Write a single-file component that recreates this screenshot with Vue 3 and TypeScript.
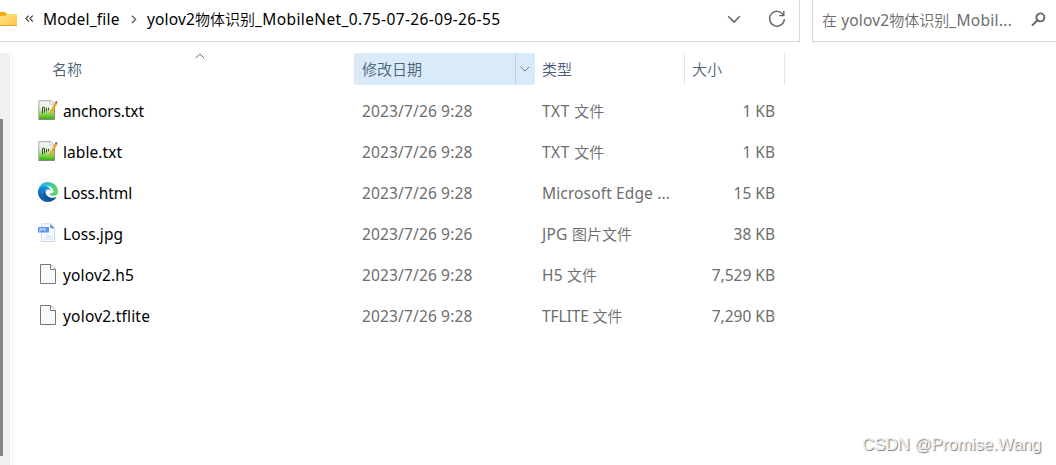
<script setup lang="ts">
type Kind = 'txt' | 'edge' | 'jpg' | 'blank'
interface FileRow {
  name: string
  nameGap: number
  date: string
  type: string
  typeCjk: string
  typeGap: number
  size: string
  kind: Kind
}
const files: FileRow[] = [
  { name: 'anchors.txt', nameGap: -0.1, date: '2023/7/26 9:28', type: 'TXT ', typeCjk: '文件', typeGap: 0.5, size: '1 KB', kind: 'txt' },
  { name: 'lable.txt', nameGap: 0.07, date: '2023/7/26 9:28', type: 'TXT ', typeCjk: '文件', typeGap: 0.5, size: '1 KB', kind: 'txt' },
  { name: 'Loss.html', nameGap: -0.13, date: '2023/7/26 9:28', type: 'Microsoft Edge ...', typeCjk: '', typeGap: 0.13, size: '15 KB', kind: 'edge' },
  { name: 'Loss.jpg', nameGap: 0.07, date: '2023/7/26 9:26', type: 'JPG ', typeCjk: '图片文件', typeGap: 0.25, size: '38 KB', kind: 'jpg' },
  { name: 'yolov2.h5', nameGap: 0.15, date: '2023/7/26 9:28', type: 'H5 ', typeCjk: '文件', typeGap: 0.2, size: '7,529 KB', kind: 'blank' },
  { name: 'yolov2.tflite', nameGap: 0.2, date: '2023/7/26 9:28', type: 'TFLITE ', typeCjk: '文件', typeGap: -0.1, size: '7,290 KB', kind: 'blank' },
]
</script>

<template>
  <div class="window">
    <header class="top">
      <div class="address">
        <svg class="folder" width="18" height="16" viewBox="0 0 18 16">
          <defs>
            <linearGradient id="fold" x1="0" y1="0" x2="1" y2="1">
              <stop offset="0" stop-color="#ffe08a" /><stop offset="1" stop-color="#fdc843" />
            </linearGradient>
          </defs>
          <path d="M0 1h5l2 2h10v4H0z" fill="#f0ae19" />
          <path d="M0 5h5l2-2h10v12H0z" fill="url(#fold)" />
          <path d="M0 14.5h17" stroke="#e5aa2c" />
        </svg>
        <svg class="back" width="9" height="8" viewBox="0 0 9 8" fill="none" stroke="#333" stroke-width="1.1">
          <path d="M3.8.7.9 3.6l2.9 2.9M7.8.7 4.9 3.6l2.9 2.9" />
        </svg>
        <span class="crumb parent">Model_file</span>
        <svg class="sep" width="6" height="9" viewBox="0 0 6 9" fill="none" stroke="#555" stroke-width="1.3">
          <path d="m1 .8 3.6 3.6L1 8" />
        </svg>
        <span class="crumb current"><span class="yolo">yolov2</span><span class="cjk">物体识别</span><span class="tail">_MobileNet_0.75-07-26-09-26-55</span></span>
        <svg class="drop" width="14" height="9" viewBox="0 0 14 9" fill="none" stroke="#666" stroke-width="1.6">
          <path d="m1.2 1.2 5.8 5.9 5.8-5.9" />
        </svg>
        <svg class="reload" width="18" height="18" viewBox="0 0 18 18" fill="none" stroke="#666" stroke-width="1.4">
          <path d="M15.4 5A7.4 7.4 0 1 0 16.4 9M15.8 1v4.6h-4.6" />
        </svg>
      </div>
      <div class="search">
        <span class="hint"><span class="cjk">在</span><span class="yolo">&nbsp;yolov2</span><span class="cjk">物体识别</span><span class="hint-tail">_Mobil...</span></span>
        <svg class="glass" width="15" height="15" viewBox="0 0 15 15" fill="none" stroke="#666" stroke-width="1.9">
          <circle cx="9.4" cy="5.4" r="4" /><path d="M6.5 8.3 1 13.6" />
        </svg>
      </div>
    </header>

    <main class="body">
      <aside class="rail"><div class="thumb"></div></aside>
      <section class="list">
        <div class="heads">
          <div class="head h-name">名称
            <svg class="sort" width="10" height="6" viewBox="0 0 10 6" fill="none" stroke="#666"><path d="m.6 5.2 4.3-4.3 4.3 4.3" /></svg>
          </div>
          <div class="head h-date">
            <span>修改日期</span>
            <i class="pick"><svg width="10" height="6" viewBox="0 0 10 6" fill="none" stroke="#6a7a89"><path d="m.6.8 4.3 4.3L9.2.8" /></svg></i>
          </div>
          <div class="head h-type">类型</div>
          <div class="head h-size">大小</div>
        </div>
        <div v-for="f in files" :key="f.name" class="row">
          <div class="icon">
            <svg v-if="f.kind === 'txt'" width="20" height="21" viewBox="0 0 20 21">
              <defs>
                <linearGradient id="green" x1="0" y1="0" x2="0" y2="1">
                  <stop offset="0" stop-color="#f6f7f6" /><stop offset=".4" stop-color="#e4f0d8" /><stop offset=".75" stop-color="#80d044" /><stop offset="1" stop-color="#2fae06" />
                </linearGradient>
              </defs>
              <path d="M.8.7h12.4L16.4 4v15.5H.8z" fill="url(#green)" stroke="#a5a5a5" />
              <path d="M.8 19.5h15.6M16.5 4v15" stroke="#888" />
              <path d="M12 .8v3.300h4" fill="#fff" stroke="#b5b5b5" stroke-width=".7" />
              <path d="M4.500 13.500V7.300h2V12.500M8.500 7.800v3.500M10.500 7.800v2.500" fill="none" stroke="#3c4a39" stroke-width="1" />
              <path d="m11.500 14.900 1-3.500 4.600-8.700 1.700 1.100-4.700 8.800z" fill="#f3ad27" stroke="#d18618" stroke-width=".4" />
              <path d="m17 2.800.9-1.900 1.600.9-.8 1.900z" fill="#954b5c" />
            </svg>
            <svg v-else-if="f.kind === 'edge'" width="20" height="20" viewBox="0 0 256 256">
              <defs>
                <linearGradient id="e1" x1="63" y1="177" x2="241" y2="177" gradientUnits="userSpaceOnUse"><stop stop-color="#0c59a4" /><stop offset="1" stop-color="#114a8b" /></linearGradient>
                <linearGradient id="e2" x1="157" y1="99" x2="46" y2="221" gradientUnits="userSpaceOnUse"><stop stop-color="#1b9de2" /><stop offset=".6" stop-color="#1474c9" /><stop offset="1" stop-color="#0c59a4" /></linearGradient>
                <linearGradient id="e3" x1="0" y1="90" x2="250" y2="120" gradientUnits="userSpaceOnUse"><stop stop-color="#24a9df" /><stop offset=".5" stop-color="#2bc3c8" /><stop offset="1" stop-color="#65dc50" /></linearGradient>
              </defs>
              <path fill="url(#e1)" d="M231 190c-3 2-7 4-11 5a101 101 0 0 1-36 7c-47 0-88-33-88-74 0-11 6-22 16-27-43 1-53 46-53 72 0 74 68 81 82 81 8 0 20-2 27-5a128 128 0 0 0 67-53c2-3-1-7-4-6z" />
              <path fill="url(#e2)" d="M106 241a79 79 0 0 1-23-21 81 81 0 0 1 29-120c3-1 9-4 16-4 12 0 22 6 28 14-1-34-31-64-76-64C39 46 0 84 0 130a128 128 0 0 0 168 120 76 76 0 0 1-62-9z" />
              <path fill="url(#e3)" d="M152 149c-1 1-3 4-3 7 0 3 2 6 5 9 17 12 49 10 49 10 13 0 25-3 36-9 15-9 17-31 17-44C256 44 192 0 128 0 48 0 1 65 0 128c1-46 47-84 100-84 4 0 29 1 52 13 20 11 31 23 39 36 8 14 9 31 9 31s-7 23-48 25z" />
            </svg>
            <svg v-else-if="f.kind === 'jpg'" width="20" height="20" viewBox="0 0 20 20">
              <path d="M3.5.8h9.200l3.800 3.800v13.900h-13z" fill="#f8fbff" stroke="#c6d8f3" />
              <path d="M12.300 1v4.200h4.200z" fill="#4b89e5" />
              <path d="M6 17v-2.500l2-1.500 2.500-1.700 2.200 1L15 14v3z" fill="#e2edfd" />
              <rect x="0" y="4" width="11" height="5.500" rx=".5" fill="#5993e9" />
              <text x="1.300" y="8.400" class="jpg-label">JPG</text>
            </svg>
            <svg v-else class="doc" width="16" height="20" viewBox="0 0 16 20" fill="#fafafa" stroke="#777">
              <path d="M.5.5h10.200l4.800 4.800v14.200H.5z" /><path d="M10.500.5v5h5" fill="#fff" />
            </svg>
          </div>
          <div class="name" :style="{ letterSpacing: f.nameGap + 'px' }">{{ f.name }}</div>
          <div class="date">{{ f.date }}</div>
          <div class="type"><span :style="{ letterSpacing: f.typeGap + 'px' }">{{ f.type }}</span><span class="cjk">{{ f.typeCjk }}</span></div>
          <div class="size">{{ f.size }}</div>
        </div>
      </section>
    </main>
    <div class="watermark">CSDN @Promise.Wang</div>
  </div>
</template>

<style>
html, body { margin: 0; background: #fff; overflow: hidden; }
</style>
<style scoped>
.window { position: relative; width: 1056px; height: 465px; overflow: hidden; background: #fff; font-family: "Noto Sans", "Noto Sans CJK SC", sans-serif; font-size: 15.5px; line-height: 20px; color: #000; white-space: pre; }
.window * { box-sizing: border-box; }
svg { display: block; flex: none; }
.cjk { font-family: "Noto Sans CJK SC", sans-serif; font-size: 15px; line-height: 18px; letter-spacing: 0; font-weight: 350; }
.top { height: 42px; display: flex; gap: 12px; }
.address { width: 800px; height: 42px; border: solid #d9d9d9; border-width: 0 1px 1px 0; display: flex; align-items: center; padding-bottom: 3px; }
.back { margin-left: 7px; }
.crumb { height: 20px; }
.parent { margin-left: 9px; width: 76px; letter-spacing: .2px; }
.sep { margin-left: 12px; }
.current { margin-left: 10px; width: 354px; }
.yolo { letter-spacing: .15px; }
.tail { letter-spacing: .38px; }
.hint-tail { letter-spacing: .3px; }
.drop { margin-left: 226px; }
.reload { margin-left: 27px; }
.search { width: 244px; height: 42px; border: solid #d9d9d9; border-width: 0 0 1px 1px; display: flex; align-items: center; padding: 0 0 2px 9px; color: #6d6d6d; }
.hint { width: 191px; height: 20px; }
.glass { margin-left: 18px; }
.body { display: flex; padding-top: 11px; height: 423px; }
.rail { width: 13px; border-right: 1px solid #f3f3f3; background: linear-gradient(90deg, #f0f0f0 10px, #fff 10px); padding-top: 66px; }
.thumb { width: 3px; height: 337px; background: #858585; }
.list { width: 1043px; }
.heads { display: flex; height: 32px; color: #4c607a; font-family: "Noto Sans CJK SC", sans-serif; font-size: 15px; font-weight: 350; margin-bottom: 6px; }
.head { height: 32px; line-height: 32px; position: relative; }
.h-name { width: 342px; padding-left: 39px; border-right: 1px solid #e3e3e3; }
.sort { position: absolute; left: 182px; top: 0; }
.h-date { width: 180px; padding-left: 7px; background: #d9ebf9; border-radius: 2px; display: flex; justify-content: space-between; }
.pick { width: 20px; height: 32px; border-left: 1px solid #b5cfe4; display: flex; align-items: center; justify-content: center; padding-right: 2px; }
.h-type { width: 150px; padding-left: 7px; border-right: 1px solid #e3e3e3; }
.h-size { width: 100px; padding-left: 7px; border-right: 1px solid #e3e3e3; }
.row { display: flex; height: 41px; align-items: center; color: #6d6d6d; padding-left: 25px; }
.icon { width: 25px; height: 23px; }
.doc { margin-left: 2px; }
.jpg-label { font: 700 4px "Noto Sans", sans-serif; fill: #dceaff; }
.name, .date, .type, .size { height: 20px; margin-bottom: 2px; }
.name { width: 299px; color: #000; }
.date { width: 180px; letter-spacing: .15px; }
.type { width: 142px; }
.size { width: 91px; text-align: right; }
.watermark { position: absolute; left: 862px; top: 434px; font: 17px/22px "Liberation Sans", sans-serif; letter-spacing: -.1px; color: #f2f2f2; text-shadow: 1px 1px 1px #777; }
</style>
